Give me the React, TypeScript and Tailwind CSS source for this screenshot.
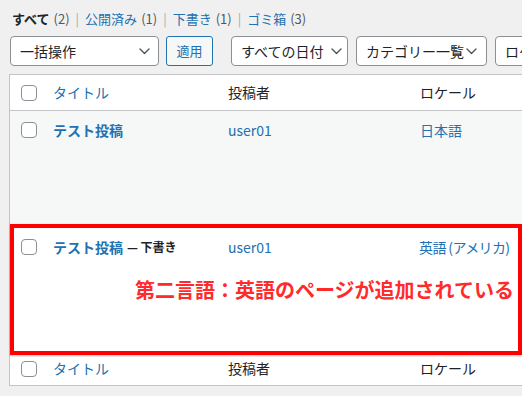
import React from "react";

const Chevron = () => (
  <svg width="11" height="7" viewBox="0 0 11 7" fill="none" className="shrink-0">
    <path d="M1 1l4.5 4.5L10 1" stroke="#50575e" strokeWidth="1.4" strokeLinecap="round" strokeLinejoin="round" />
  </svg>
);

const Check = () => (
  <div className="w-4 h-4 rounded-[4px] border border-[#8c8f94] bg-white shrink-0" />
);

export default function App() {
  return (
    <div
      className="w-[522px] h-[396px] overflow-hidden bg-[#f0f0f1] text-[#1d2327]"
      style={{ fontFamily: '"Noto Sans CJK JP", "Noto Sans", sans-serif' }}
    >
      {/* status links */}
      <div className="pt-[10px] pl-[12px] h-[36px] text-[13px] leading-[18px] flex items-start whitespace-nowrap">
        <span className="font-bold">すべて</span>
        <span className="text-[#50575e] ml-1">(2)</span>
        <span className="text-[#a7aaad] mx-[6px]">|</span>
        <span className="text-[#2271b1]">公開済み</span>
        <span className="text-[#50575e] ml-1">(1)</span>
        <span className="text-[#a7aaad] mx-[6px]">|</span>
        <span className="text-[#2271b1]">下書き</span>
        <span className="text-[#50575e] ml-1">(1)</span>
        <span className="text-[#a7aaad] mx-[6px]">|</span>
        <span className="text-[#2271b1]">ゴミ箱</span>
        <span className="text-[#50575e] ml-1">(3)</span>
      </div>

      {/* filters */}
      <div className="flex items-center h-[30px] pl-[10px] text-[14px] whitespace-nowrap">
        <div className="shrink-0 w-[149px] h-[30px] border border-[#8c8f94] rounded-[4px] bg-white flex items-center justify-between pl-[9px] pr-[8px]">
          <span>一括操作</span>
          <Chevron />
        </div>
        <div className="shrink-0 ml-[7px] w-[47px] h-[30px] border border-[#2271b1] rounded-[3px] bg-[#f6f7f7] text-[#2271b1] text-[13px] flex items-center justify-center">
          適用
        </div>
        <div className="shrink-0 ml-[18px] w-[117px] h-[30px] border border-[#8c8f94] rounded-[4px] bg-white flex items-center justify-between pl-[9px] pr-[5px]">
          <span>すべての日付</span>
          <Chevron />
        </div>
        <div className="shrink-0 ml-[8px] w-[131px] h-[30px] border border-[#8c8f94] rounded-[4px] bg-white flex items-center justify-between pl-[9px] pr-[9px]">
          <span>カテゴリー一覧</span>
          <Chevron />
        </div>
        <div className="shrink-0 ml-[8px] w-[110px] h-[30px] border border-[#8c8f94] rounded-[4px] bg-white flex items-center pl-[9px]">
          <span>ロケール</span>
        </div>
      </div>

      {/* table */}
      <div className="mt-[8px] ml-[9px] w-[600px] border border-[#c3c4c7] bg-white text-[14px]">
        {/* header */}
        <div className="h-[36px] flex items-center border-b border-[#c3c4c7] whitespace-nowrap">
          <div className="w-[43px] pl-[11px]"><Check /></div>
          <div className="w-[175px] text-[#2271b1]">タイトル</div>
          <div className="w-[192px]">投稿者</div>
          <div>ロケール</div>
        </div>

        {/* row 1 */}
        <div className="h-[113px] bg-[#f6f7f7] pt-[10px] whitespace-nowrap">
          <div className="flex items-center h-[18px]">
            <div className="w-[43px] pl-[11px]"><Check /></div>
            <div className="w-[175px] text-[#2271b1] font-bold">テスト投稿</div>
            <div className="w-[192px] text-[#2271b1]">user01</div>
            <div className="text-[#2271b1]">日本語</div>
          </div>
        </div>

        {/* row 2 */}
        <div className="relative h-[131px] bg-white whitespace-nowrap">
          <div className="pt-[14px] flex items-center h-[32px]">
            <div className="w-[43px] pl-[11px]"><Check /></div>
            <div className="w-[175px] flex items-center">
              <span className="text-[#2271b1] font-bold">テスト投稿</span>
              <span className="ml-[4px] font-bold text-[#1d2327] text-[12px]">— 下書き</span>
            </div>
            <div className="w-[191px] text-[#2271b1]">user01</div>
            <div className="text-[#2271b1] tracking-[-0.6px]">英語 (アメリカ)</div>
          </div>
          <div className="mt-[21px] pl-[125px] text-[20px] leading-[26px] font-bold text-[#ff2a2a]">
            第二言語：英語のページが追加されている
          </div>
          <div className="absolute left-0 top-0 w-[512px] h-[131px] border-[4px] border-[#ff0000] shadow-[0_1px_2px_rgba(0,0,0,0.25)]" />
        </div>

        {/* footer */}
        <div className="h-[30px] pb-[3px] flex items-center whitespace-nowrap">
          <div className="w-[43px] pl-[11px]"><Check /></div>
          <div className="w-[175px] text-[#2271b1]">タイトル</div>
          <div className="w-[192px]">投稿者</div>
          <div>ロケール</div>
        </div>
      </div>
    </div>
  );
}
